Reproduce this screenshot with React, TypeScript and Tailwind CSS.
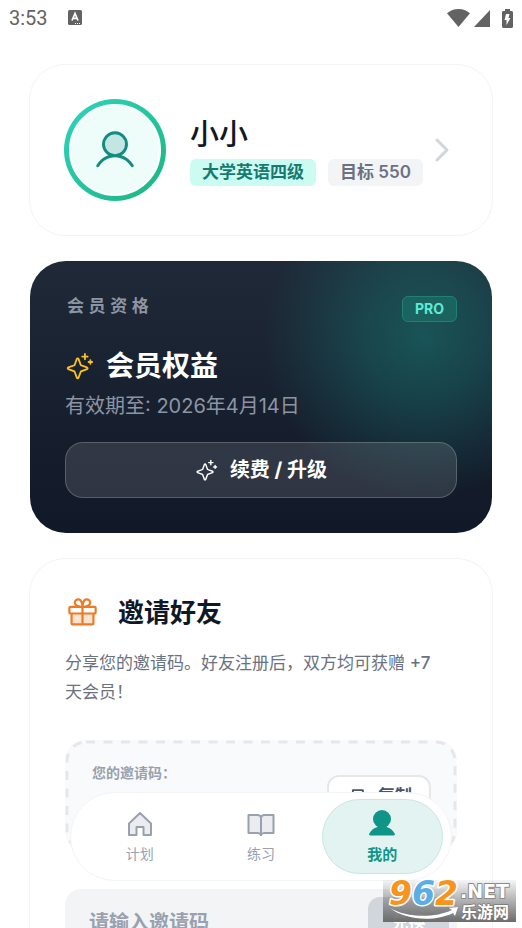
import type { ReactNode } from "react";
import { PiCaretRightBold, PiCopyBold, PiGiftDuotone, PiSparkle, PiUserDuotone } from "react-icons/pi";

function StatusBar() {
  return (
    <header className="flex h-9 shrink-0 items-center justify-between px-[9px] text-[#636363]">
      <div className="flex items-center gap-5">
        <span className="font-[Roboto,sans-serif] text-xl">3:53</span>
        <svg width="14" height="16" viewBox="0 0 14 16" aria-hidden="true">
          <rect width="14" height="15" rx="1.5" fill="currentColor" />
          <path d="M4 10.5 7 3.5l3 7M5 8.3h4" fill="none" stroke="#fff" strokeWidth="1.7" />
          <path d="M7 13.5h1m1 0h1m1 0h1" stroke="#fff" strokeWidth="1" />
        </svg>
      </div>
      <div className="flex items-center">
        <svg width="23" height="18" viewBox="0 0 23 18" aria-hidden="true">
          <path d="M0 4.2C3.3 1.6 7.2 0 11.5 0s8.2 1.6 11.5 4.2L11.5 18Z" fill="currentColor" />
        </svg>
        <svg className="ml-1" width="16" height="17" viewBox="0 0 16 17" aria-hidden="true">
          <path d="M16 0v17H0Z" fill="currentColor" />
        </svg>
        <svg className="ml-3" width="11" height="19" viewBox="0 0 11 19" aria-hidden="true">
          <path d="M3 0h5v2h2l1 1v15l-1 1H1l-1-1V3l1-1h2Z" fill="currentColor" />
          <path d="M4 5h3.5l-1 4H8.5L4.5 16v-5H2.5Z" fill="#fff" />
        </svg>
      </div>
    </header>
  );
}

function ProfileCard() {
  return (
    <section className="flex h-[172px] items-center rounded-[36px] border border-gray-100 px-[34px]">
      <div className="size-[102px] shrink-0 rounded-full bg-linear-to-br from-[#2dd4bf] to-[#1cb57f] p-[5px]">
        <div className="flex size-full items-center justify-center rounded-full border-2 border-white bg-[#effdfa] text-[#128c80]">
          <PiUserDuotone size={46} />
        </div>
      </div>
      <div className="ml-6 min-w-0">
        <h1 className="text-[29px] leading-10 font-medium text-gray-900">小小</h1>
        <div className="mt-1 flex gap-3 text-[17px] leading-[27px] font-semibold whitespace-nowrap">
          <span className="rounded-md bg-[#ccfbf1] px-3 text-[#167a71]">大学英语四级</span>
          <span className="rounded-md bg-gray-100 px-3 text-gray-500">目标 550</span>
        </div>
      </div>
      <button type="button" aria-label="小小" className="ml-0.5 text-gray-300">
        <PiCaretRightBold size={32} />
      </button>
    </section>
  );
}

function MembershipCard() {
  return (
    <section className="mx-px rounded-[36px] bg-[radial-gradient(circle_at_85%_28%,#14b8a652,#14b8a638_60px,#14b8a618_115px,transparent_160px),linear-gradient(#1f2937,#111827)] p-[35px]">
      <div className="flex items-start justify-between">
        <h2 className="pl-0.5 text-[17px] leading-5 font-semibold tracking-[0.27em] text-[#8d95a3]">会员资格</h2>
        <span className="rounded-md border border-[#218076] bg-[#1b635f] px-3 text-sm leading-6 font-bold text-[#5eead4]">
          PRO
        </span>
      </div>
      <div className="mt-6 flex items-center gap-3 text-white">
        <PiSparkle size={29} className="text-[#fbbf24]" />
        <strong className="text-[28px] leading-10 font-bold">会员权益</strong>
      </div>
      <p className="mt-1 text-xl leading-8 text-[#8d95a3]">有效期至: 2026年4月14日</p>
      <button
        type="button"
        className="mt-5 flex h-14 w-full items-center justify-center gap-3 rounded-[18px] border border-white/20 bg-white/12 text-xl font-bold text-white"
      >
        <PiSparkle size={23} />
        续费 / 升级
      </button>
    </section>
  );
}

function InviteCard() {
  return (
    <section className="rounded-t-[36px] border border-b-0 border-gray-100 px-[35px] pt-9">
      <h2 className="flex items-center gap-[18px] text-[26px] leading-9 font-semibold text-gray-900">
        <PiGiftDuotone size={35} className="text-[#ee7a24]" />
        邀请好友
      </h2>
      <p className="mt-[18px] pr-3 text-[17px] leading-[29px] text-gray-500">
        分享您的邀请码。好友注册后，双方均可获赠 <span className="font-medium">+7</span> 天会员！
      </p>
      <div className="relative mt-[33px] flex h-28 items-start justify-between rounded-[20px] bg-gray-50 pr-[26px] pl-[27px]">
        <svg className="absolute inset-0.5 h-[calc(100%-4px)] w-[calc(100%-4px)] overflow-visible" aria-hidden="true">
          <rect
            width="100%"
            height="100%"
            rx="19"
            fill="none"
            stroke="#e5e7eb"
            strokeWidth="3"
            strokeDasharray="9 8.5"
          />
        </svg>
        <span className="mt-[21px] text-sm leading-6 font-semibold text-gray-400">您的邀请码：</span>
        <button
          type="button"
          className="relative mt-[35px] flex h-11 items-center gap-3 rounded-xl border-2 border-gray-200 bg-white px-[17px] text-[17px] font-semibold text-gray-600"
        >
          <PiCopyBold size={20} />
          复制
        </button>
      </div>
      <form className="mt-[37px] flex h-17 items-center rounded-2xl bg-gray-100 pr-2 pl-6" onSubmit={(e) => e.preventDefault()}>
        <input
          type="text"
          aria-label="请输入邀请码"
          placeholder="请输入邀请码"
          className="min-w-0 flex-1 bg-transparent text-xl font-semibold outline-none placeholder:text-gray-400"
        />
        <button type="submit" className="h-13 w-[81px] rounded-xl bg-gray-300 text-[17px] font-bold text-white">
          兑换
        </button>
      </form>
    </section>
  );
}

function HouseIcon() {
  return (
    <svg width="28" height="28" viewBox="0 0 28 28" fill="none" stroke="currentColor" strokeWidth="2" aria-hidden="true">
      <path d="M3 13.5 14 3l11 10.5V25h-7.5v-8h-7v8H3Z" fill="currentColor" fillOpacity="0.2" strokeLinejoin="round" />
    </svg>
  );
}

function BookIcon() {
  return (
    <svg width="28" height="28" viewBox="0 0 28 28" fill="none" stroke="currentColor" strokeWidth="2" aria-hidden="true">
      <path
        d="M1.5 5h9a3.5 3 0 0 1 3.5 3 3.5 3 0 0 1 3.5-3h9v18h-9a3.5 3 0 0 0-3.5 2 3.5 3 0 0 0-3.5-2h-9Z"
        fill="currentColor"
        fillOpacity="0.2"
        strokeLinejoin="round"
      />
      <path d="M14 8v18" />
    </svg>
  );
}

function PersonIcon() {
  return (
    <svg width="28" height="28" viewBox="0 0 28 28" fill="currentColor" aria-hidden="true">
      <circle cx="14" cy="10" r="9" />
      <path d="M9.5 16.500h9v1.500c4 1 6.500 3.500 8.300 6.800q.6 1.700-1.200 1.700H2.400q-1.800 0-1.200-1.700C3 21.500 5.500 19 9.500 18Z" />
    </svg>
  );
}

function Tab({ icon, label, active = false }: { icon: ReactNode; label: string; active?: boolean }) {
  return (
    <button
      type="button"
      aria-current={active ? "page" : undefined}
      className={
        active
          ? "flex flex-1 flex-col items-center justify-center gap-1.5 rounded-full border border-[#c5e8e2] bg-[#e3f3f1] pt-0.5 text-[15px] leading-6 font-semibold text-[#0f9488]"
          : "flex flex-1 flex-col items-center justify-center gap-1 rounded-full border border-transparent pt-0.5 text-sm leading-6 text-gray-400"
      }
    >
      {icon}
      {label}
    </button>
  );
}

function Watermark() {
  return (
    <div className="absolute right-1.5 bottom-1.5 h-[42px] w-[133px] bg-linear-to-b from-gray-400/10 to-[#6b6b6b]">
      <svg className="size-full overflow-visible" viewBox="0 0 133 42">
        <g paintOrder="stroke" strokeLinejoin="round" fontWeight="700">
          <text
            x="6"
            y="25"
            fontFamily="'DejaVu Sans', sans-serif"
            fontSize="33"
            fontStyle="italic"
            fill="#f7941d"
            stroke="#fff"
            strokeWidth="3"
          >
            9<tspan fill="#5aaee6">6</tspan>2
          </text>
          <text x="77" y="18" fontFamily="'DejaVu Sans', sans-serif" fontSize="19" fill="#fff" stroke="#8b8b8b" strokeWidth="2">
            .NET
          </text>
          <text x="78" y="38" fontFamily="'Noto Sans CJK SC', sans-serif" fontSize="16" fill="#fff" stroke="#777" strokeWidth="1.5">
            乐游网
          </text>
        </g>
        <path d="M7 28c15 9 43 11 62 2l-3-2 9-1-3 9-2-3c-20 10-50 6-63-5Z" fill="#fff" />
      </svg>
    </div>
  );
}

export default function App() {
  return (
    <div className="relative flex h-screen flex-col overflow-hidden bg-white font-[Inter,'Noto_Sans_CJK_SC',sans-serif]">
      <StatusBar />
      <main className="flex min-h-0 flex-1 flex-col gap-[25px] overflow-hidden px-[29px] pt-7 *:shrink-0">
        <ProfileCard />
        <MembershipCard />
        <InviteCard />
      </main>
      <nav className="absolute inset-x-[70px] bottom-[47px] flex h-[89px] rounded-full border border-gray-100 bg-white px-2 py-1.5">
        <Tab icon={<HouseIcon />} label="计划" />
        <Tab icon={<BookIcon />} label="练习" />
        <Tab icon={<PersonIcon />} label="我的" active />
      </nav>
      <Watermark />
    </div>
  );
}
